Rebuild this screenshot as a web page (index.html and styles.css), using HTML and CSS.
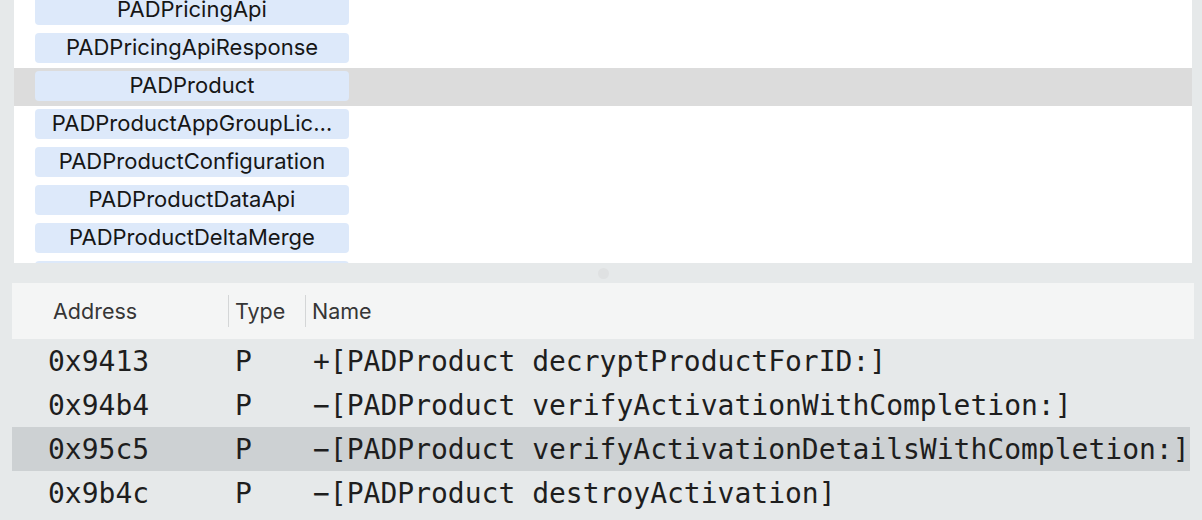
FILE: index.html
```html
<!DOCTYPE html>
<html>
<head>
<meta charset="utf-8">
<link rel="stylesheet" href="styles.css">
</head>
<body>
<div class="classes">
  <div class="class-list">
    <div class="class-row"><div class="pill">PADPricingApi</div></div>
    <div class="class-row"><div class="pill">PADPricingApiResponse</div></div>
    <div class="class-row selected"><div class="pill">PADProduct</div></div>
    <div class="class-row"><div class="pill">PADProductAppGroupLic…</div></div>
    <div class="class-row"><div class="pill">PADProductConfiguration</div></div>
    <div class="class-row"><div class="pill">PADProductDataApi</div></div>
    <div class="class-row"><div class="pill">PADProductDeltaMerge</div></div>
    <div class="class-row"><div class="pill"></div></div>
  </div>
</div>
<div class="splitter"><span class="handle"></span></div>
<div class="methods">
  <div class="header">
    <div class="col-addr">Address</div>
    <div class="col-type">Type</div>
    <div class="col-name">Name</div>
  </div>
  <div class="method-row">
    <div class="c-addr">0x9413</div><div class="c-type">P</div><div class="c-name">+[PADProduct decryptProductForID:]</div>
  </div>
  <div class="method-row">
    <div class="c-addr">0x94b4</div><div class="c-type">P</div><div class="c-name">−[PADProduct verifyActivationWithCompletion:]</div>
  </div>
  <div class="method-row selected">
    <div class="c-addr">0x95c5</div><div class="c-type">P</div><div class="c-name">−[PADProduct verifyActivationDetailsWithCompletion:]</div>
  </div>
  <div class="method-row">
    <div class="c-addr">0x9b4c</div><div class="c-type">P</div><div class="c-name">−[PADProduct destroyActivation]</div>
  </div>
</div>
</body>
</html>
```

FILE: styles.css
```css
html, body {
  margin: 0;
  padding: 0;
}
body {
  width: 1202px;
  height: 520px;
  overflow: hidden;
  background: #e6e9ea;
  font-family: Inter, "Liberation Sans", sans-serif;
}
.classes {
  margin-left: 14px;
  width: 1178px;
  height: 263px;
  background: #ffffff;
  overflow: hidden;
}
.class-list {
  margin-top: -8px;
}
.class-row {
  height: 38px;
  padding-top: 3px;
  box-sizing: border-box;
}
.class-row.selected {
  background: #dcdcdc;
}
.pill {
  margin-left: 21px;
  width: 314px;
  height: 30px;
  border-radius: 4px;
  background: #dde9fa;
  color: #161616;
  font-size: 22px;
  line-height: 28px;
  text-align: center;
  white-space: nowrap;
  overflow: hidden;
}
.splitter {
  height: 20px;
  display: flex;
  justify-content: center;
  align-items: center;
  padding-left: 4px;
}
.handle {
  width: 11px;
  height: 11px;
  border-radius: 50%;
  background: #dfe1e2;
}
.methods {
  margin-left: 12px;
  width: 1182px;
}
.header {
  height: 56px;
  background: #f4f5f5;
  display: flex;
  align-items: center;
  color: #363636;
  font-size: 21.5px;
}
.col-addr {
  width: 216px;
  padding-left: 41px;
  box-sizing: border-box;
}
.col-type, .col-name {
  border-left: 1px solid #d4d6d7;
  height: 32px;
  line-height: 32px;
  padding-left: 6px;
  box-sizing: border-box;
}
.col-type {
  width: 77px;
}
.method-row {
  height: 44px;
  display: flex;
  align-items: center;
  font-family: "DejaVu Sans Mono", "Liberation Mono", monospace;
  font-size: 28px;
  color: #1e1e1e;
  white-space: nowrap;
}
.method-row.selected {
  background: #cdd1d3;
  margin-right: 4px;
}
.c-addr {
  width: 223px;
  padding-left: 36px;
  box-sizing: border-box;
}
.c-type {
  width: 78px;
}
```
